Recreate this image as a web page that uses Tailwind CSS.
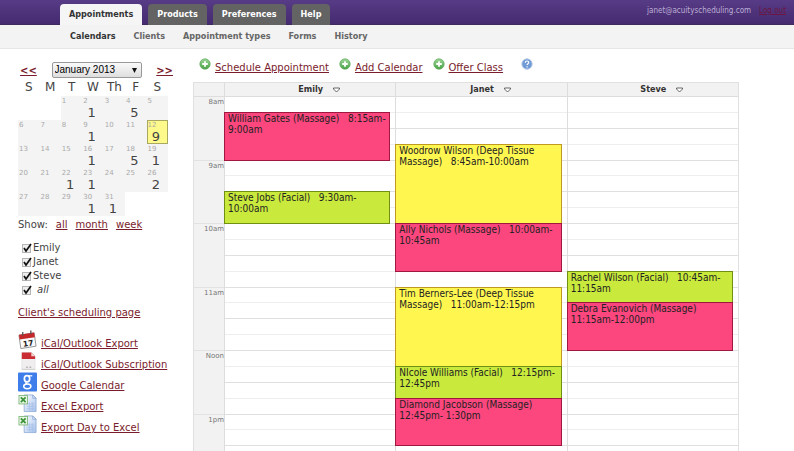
<!DOCTYPE html>
<html lang="en">
<head>
    <meta charset="UTF-8">
    <meta name="viewport" content="width=device-width, initial-scale=1.0">
    <title>Appointments - Calendars</title>
    <script src="https://cdn.jsdelivr.net/npm/@tailwindcss/browser@4"></script>
</head>
<body class="h-screen overflow-hidden bg-white font-['DejaVu_Sans',sans-serif] text-[10px] text-[#444]">

    <!-- Icons shared by several links -->
    <svg class="absolute h-0 w-0" xmlns="http://www.w3.org/2000/svg">
        <defs>
            <linearGradient id="green" x1="0" y1="0" x2="0" y2="1">
                <stop offset="0" stop-color="#9ad695" />
                <stop offset="1" stop-color="#4ba348" />
            </linearGradient>
            <linearGradient id="sheet" x1="0" y1="0" x2="1" y2="1">
                <stop offset="0" stop-color="#ffffff" />
                <stop offset="1" stop-color="#a4c1ec" />
            </linearGradient>
        </defs>
        <symbol id="icon-add" viewBox="0 0 12 12">
            <circle cx="6" cy="6" r="5.2" fill="url(#green)" stroke="#5fa75c" stroke-width=".7" />
            <path d="M6 3.2v5.6M3.2 6h5.6" stroke="#fff" stroke-width="1.8" />
        </symbol>
        <symbol id="icon-excel" viewBox="0 0 20 20">
            <path d="M6.500 1.500h9l3.500 3.500v14h-12.500z" fill="url(#sheet)" stroke="#8aa6d4" stroke-width=".8" />
            <path d="M15.500 1.500v3.500h3.500z" fill="#dbe7fa" stroke="#6f93cc" stroke-width=".6" />
            <path d="M9 11h8M9 13.500h8M9 16h8M12 9v9M15 9v9" stroke="#9db9e4" stroke-width=".6" />
            <rect x="1" y="2" width="9" height="9" fill="#e9f5e6" stroke="#6fae67" stroke-width=".8" />
            <path d="M3 4l5 5M8 4l-5 5" stroke="#3c9438" stroke-width="1.800" />
        </symbol>
    </svg>

    <!-- Top bar -->
    <header class="flex h-[25px] items-end justify-between border-b border-[#3e2a5c] bg-linear-to-b from-[#573b86] to-[#452b70] pr-2 pl-[60px]">
        <nav class="-mb-px flex gap-1.5 font-['DejaVu_Sans_Condensed','DejaVu_Sans',sans-serif] text-[9px] font-bold">
            <a href="#" class="flex h-[21px] items-center rounded-t bg-[#f5f5f5] px-[9px] text-[#333]">Appointments</a>
            <a href="#" class="flex h-[21px] items-center rounded-t bg-[#636363] px-[9px] text-white">Products</a>
            <a href="#" class="flex h-[21px] items-center rounded-t bg-[#636363] px-[9px] text-white">Preferences</a>
            <a href="#" class="flex h-[21px] items-center rounded-t bg-[#636363] px-[9px] text-white">Help</a>
        </nav>
        <div class="flex h-[21px] gap-2 font-['DejaVu_Sans_Condensed','DejaVu_Sans',sans-serif] text-[8px] leading-4">
            <span class="text-[#bcaed3]">janet@acuityscheduling.com</span>
            <a href="#" class="text-[#6b1540] underline">Log out</a>
        </div>
    </header>

    <nav class="flex h-6 items-center gap-[18px] border-b border-[#e6e6e6] bg-[#f3f3f3] pl-[70px] font-['DejaVu_Sans_Condensed','DejaVu_Sans',sans-serif] text-[9px] font-bold text-[#666]">
        <a href="#" class="text-[#333]">Calendars</a>
        <a href="#">Clients</a>
        <a href="#">Appointment types</a>
        <a href="#">Forms</a>
        <a href="#">History</a>
    </nav>

    <div class="flex pt-3 pl-[18px]">

        <!-- Sidebar -->
        <aside class="w-[175px] shrink-0">
            <div class="flex h-[18px] w-[155px] items-center justify-between pl-0.5 font-bold">
                <a href="#" class="text-[#7a1c2c] underline">&lt;&lt;</a>
                <div class="relative">
                    <select aria-label="Month" class="block h-4 w-[90px] appearance-none rounded-xs border border-[#999] bg-linear-to-b from-[#fafafa] to-[#dedede] pl-0.5 font-['Liberation_Sans',sans-serif] text-[10px] leading-[14px] font-normal text-black">
                        <option>January 2013</option>
                    </select>
                    <svg class="pointer-events-none absolute top-1.5 right-[5px] h-1.5 w-[5px]" viewBox="0 0 5 6"><path d="M0 0h5L2.500 5z" fill="#111" /></svg>
                </div>
                <a href="#" class="text-[#7a1c2c] underline">&gt;&gt;</a>
            </div>

            <table class="w-[150px] table-fixed border-collapse">
                <thead>
                    <tr class="h-[17px] text-[12px] leading-[17px]">
                        <th class="p-0 font-normal">S</th>
                        <th class="p-0 font-normal">M</th>
                        <th class="p-0 font-normal">T</th>
                        <th class="p-0 font-normal">W</th>
                        <th class="p-0 font-normal">Th</th>
                        <th class="p-0 font-normal">F</th>
                        <th class="p-0 font-normal">S</th>
                    </tr>
                </thead>
                <tbody id="month"></tbody>
            </table>

            <p class="flex gap-2 leading-[18px]">Show:
                <a href="#" class="text-[#7a1c2c] underline">all</a>
                <a href="#" class="text-[#7a1c2c] underline">month</a>
                <a href="#" class="text-[#7a1c2c] underline">week</a>
            </p>

            <div id="people" class="mt-[7px] pl-1 leading-[14px]"></div>

            <p class="mt-2 leading-4"><a href="#" class="text-[#7a1c2c] underline">Client's scheduling page</a></p>

            <ul class="mt-2 text-[#7a1c2c]">
                <li class="flex h-[21px] items-end gap-1">
                    <svg class="h-5 w-[19px]" viewBox="0 0 20 20">
                        <path d="M1 5l16-2.500 2 14-16 2.500z" fill="#fafafa" stroke="#777" stroke-width=".8" />
                        <path d="M1 4.500l16-2.500.7 5-16 2.500z" fill="#c5282b" />
                        <path d="M5 1.500v4M13.500 0v4" stroke="#555" stroke-width="1.400" />
                        <text x="5" y="16.500" transform="rotate(-8 10 13)" font-family="DejaVu Sans" font-size="8" font-weight="bold" fill="#222">17</text>
                    </svg>
                    <a href="#" class="leading-3 underline">iCal/Outlook Export</a>
                </li>
                <li class="flex h-[21px] items-end gap-1">
                    <svg class="h-5 w-[19px]" viewBox="0 0 20 20">
                        <path d="M4 1h10l4 4v14H4z" fill="#f0eeee" stroke="#ddd" stroke-width=".6" />
                        <path d="M4 1h10l4 4v3H4z" fill="#c92d33" />
                        <path d="M14 1v4h4z" fill="#f4d4d4" />
                        <path d="M8.500 16.500h2M12 16.500h2" stroke="#999" />
                        <path d="M4 18.800h14" stroke="#ccc" />
                    </svg>
                    <a href="#" class="leading-3 underline">iCal/Outlook Subscription</a>
                </li>
                <li class="flex h-[21px] items-end gap-1">
                    <svg class="h-5 w-[19px]" viewBox="0 0 20 20">
                        <rect x="0" y="0" width="20" height="20" rx="1" fill="#3f7eea" />
                        <g fill="none" stroke="#fff">
                            <ellipse cx="9.500" cy="6.500" rx="2.800" ry="3.300" stroke-width="1.800" />
                            <path d="M11 3.500h4" stroke-width="1.300" />
                            <path d="M9 9.800c-1.500 1.200-.5 2 1 2.500" stroke-width="1.500" />
                            <ellipse cx="9.800" cy="14.500" rx="3.800" ry="2.500" stroke-width="1.600" />
                        </g>
                    </svg>
                    <a href="#" class="leading-3 underline">Google Calendar</a>
                </li>
                <li class="flex h-[21px] items-end gap-1">
                    <svg class="h-5 w-[19px]"><use href="#icon-excel" /></svg>
                    <a href="#" class="leading-3 underline">Excel Export</a>
                </li>
                <li class="flex h-[21px] items-end gap-1">
                    <svg class="h-5 w-[19px]"><use href="#icon-excel" /></svg>
                    <a href="#" class="leading-3 underline">Export Day to Excel</a>
                </li>
            </ul>
        </aside>

        <!-- Day view -->
        <main class="min-w-0 flex-1 pr-[55px]">
            <div class="flex h-[21px] items-start gap-2.5 pl-1.5 text-[#7a1c2c]">
                <a href="#" class="flex gap-1 leading-[14px] underline"><svg class="mt-[-3px] h-3 w-3"><use href="#icon-add" /></svg>Schedule Appointment</a>
                <a href="#" class="flex gap-1 leading-[14px] underline"><svg class="mt-[-3px] h-3 w-3"><use href="#icon-add" /></svg>Add Calendar</a>
                <a href="#" class="flex gap-1 leading-[14px] underline"><svg class="mt-[-3px] h-3 w-3"><use href="#icon-add" /></svg>Offer Class</a>
                <a href="#" aria-label="Help" class="ml-2">
                    <svg class="mt-[-3px] h-3 w-3" viewBox="0 0 12 12">
                        <circle cx="6" cy="6" r="5.200" fill="#6f9ad6" stroke="#b9cbe6" />
                        <path d="M4.300 4.700c0-2.200 3.500-2.200 3.500-.2 0 1.200-1.700 1.100-1.700 2.500M6.100 8.200v1.200" fill="none" stroke="#fff" stroke-width="1.200" />
                    </svg>
                </a>
            </div>

            <div class="grid h-[15px] grid-cols-[30px_1fr_1fr_1fr] border border-b-[#ddd] border-[#e0e0e0] bg-[#f2f2f2] font-['DejaVu_Sans_Condensed','DejaVu_Sans',sans-serif] text-[9px] leading-[13px] font-bold text-[#333]">
                <div></div>
                <div class="flex items-center justify-center gap-2.5 border-l border-[#ddd] pl-[18px]">Emily
                    <svg class="h-1.5 w-[7px]" viewBox="0 0 7 6"><path d="M.5 1h6v1L3.500 5 .5 2z" fill="#fff" stroke="#555" stroke-width=".9" /></svg>
                </div>
                <div class="flex items-center justify-center gap-2.5 border-l border-[#ddd] pl-[18px]">Janet
                    <svg class="h-1.5 w-[7px]" viewBox="0 0 7 6"><path d="M.5 1h6v1L3.500 5 .5 2z" fill="#fff" stroke="#555" stroke-width=".9" /></svg>
                </div>
                <div class="flex items-center justify-center gap-2.5 border-l border-[#ddd] pl-[18px]">Steve
                    <svg class="h-1.5 w-[7px]" viewBox="0 0 7 6"><path d="M.5 1h6v1L3.500 5 .5 2z" fill="#fff" stroke="#555" stroke-width=".9" /></svg>
                </div>
            </div>

            <div id="board" class="grid h-[381px] grid-cols-[30px_1fr_1fr_1fr] border-x border-[#e0e0e0]"></div>
        </main>
    </div>

    <script>
        // Mini calendar: appointments per day of January 2013
        const counts = { 2: 1, 4: 5, 9: 1, 12: 9, 16: 1, 18: 5, 19: 1, 22: 1, 23: 1, 26: 2, 30: 1, 31: 1 };
        let html = '';
        for (let week = 0; week < 5; week++) {
            html += '<tr>';
            for (let d = 0; d < 7; d++) {
                const day = week * 7 + d - 1;
                if (day < 1 || day > 31) {
                    html += '<td></td>';
                    continue;
                }
                const look = day === 12 ? 'bg-[#fdf98b] outline -outline-offset-1 outline-[#a8a860]' : 'bg-[#f4f4f4]';
                html += `<td class="h-6 p-0 align-top ${look}">
                    <div class="h-[11px] pl-px text-[7px] leading-[11px] text-[#aaa]">${day}</div>
                    <div class="pr-2 text-right text-[13px] leading-[11px] text-[#444]">${counts[day] || ''}</div>
                </td>`;
            }
            html += '</tr>';
        }
        document.getElementById('month').innerHTML = html;

        // Calendar filter
        document.getElementById('people').innerHTML = ['Emily', 'Janet', 'Steve', 'all'].map(name => `
            <label class="flex items-center gap-0.5">
                <span class="grid h-[9px] w-[9px] *:col-start-1 *:row-start-1">
                    <input type="checkbox" checked class="peer h-[9px] w-[9px] appearance-none border border-[#b5b5b5] bg-[#eee]">
                    <svg class="pointer-events-none invisible h-[9px] w-[9px] overflow-visible peer-checked:visible" viewBox="0 0 9 9"><path d="M2 4l2 3 5-7" fill="none" stroke="#111" stroke-width="1.700" /></svg>
                </span>
                <span class="${name === 'all' ? 'pl-1 italic' : ''}">${name}</span>
            </label>`).join('');

        // Day view: from 8am, four rows to the hour
        const looks = {
            massage: 'bg-[#fb467e] border-[#a01840]',
            facial: 'bg-[#c9ea3c] border-[#6f9013]',
            deep: 'bg-[#fff750] border-[#c09a20]'
        };
        const people = [
            [
                { type: 'massage', from: 8.25, to: 9, text: 'William Gates (Massage) &nbsp; 8:15am-9:00am' },
                { type: 'facial', from: 9.5, to: 10, text: 'Steve Jobs (Facial) &nbsp; 9:30am-10:00am' }
            ],
            [
                { type: 'deep', from: 8.75, to: 10, text: 'Woodrow Wilson (Deep Tissue Massage) &nbsp; 8:45am-10:00am' },
                { type: 'massage', from: 10, to: 10.75, text: 'Ally Nichols (Massage) &nbsp; 10:00am-10:45am' },
                { type: 'deep', from: 11, to: 12.25, text: 'Tim Berners-Lee (Deep Tissue Massage) &nbsp; 11:00am-12:15pm' },
                { type: 'facial', from: 12.25, to: 12.75, text: 'NIcole Williams (Facial) &nbsp; 12:15pm-12:45pm' },
                { type: 'massage', from: 12.75, to: 13.5, text: 'Diamond Jacobson (Massage) &nbsp; 12:45pm- 1:30pm' }
            ],
            [
                { type: 'facial', from: 10.75, to: 11.25, text: 'Rachel Wilson (Facial) &nbsp; 10:45am-11:15am' },
                { type: 'massage', from: 11.25, to: 12, text: 'Debra Evanovich (Massage) &nbsp; 11:15am-12:00pm' }
            ]
        ];
        const row = time => (time - 8) * 4 + 1;

        let board = '<div class="grid grid-rows-6 bg-[#f2f2f2] text-right text-[7px] leading-[11px] text-[#777]">';
        for (const hour of ['8am', '9am', '10am', '11am', 'Noon', '1pm']) {
            board += `<div class="border-b border-[#e2e2e2]">${hour}</div>`;
        }
        board += '</div>';
        for (const events of people) {
            board += '<div class="grid grid-cols-1 grid-rows-24 border-l border-[#ddd]">';
            for (let i = 1; i <= 24; i++) {
                board += `<div class="col-start-1 border-b ${i % 2 ? 'border-[#eee]' : 'border-[#e0e0e0]'}" style="grid-row: ${i}"></div>`;
            }
            for (const e of events) {
                board += `<div class="z-10 col-start-1 mr-[5px] -mt-px -ml-px overflow-hidden border pl-[3px] font-['DejaVu_Sans_Condensed','DejaVu_Sans',sans-serif] text-[10px] leading-[11px] text-[#222] ${looks[e.type]}" style="grid-row: ${row(e.from)} / ${row(e.to)}">${e.text}</div>`;
            }
            board += '</div>';
        }
        document.getElementById('board').innerHTML = board;
    </script>

</body>
</html>
